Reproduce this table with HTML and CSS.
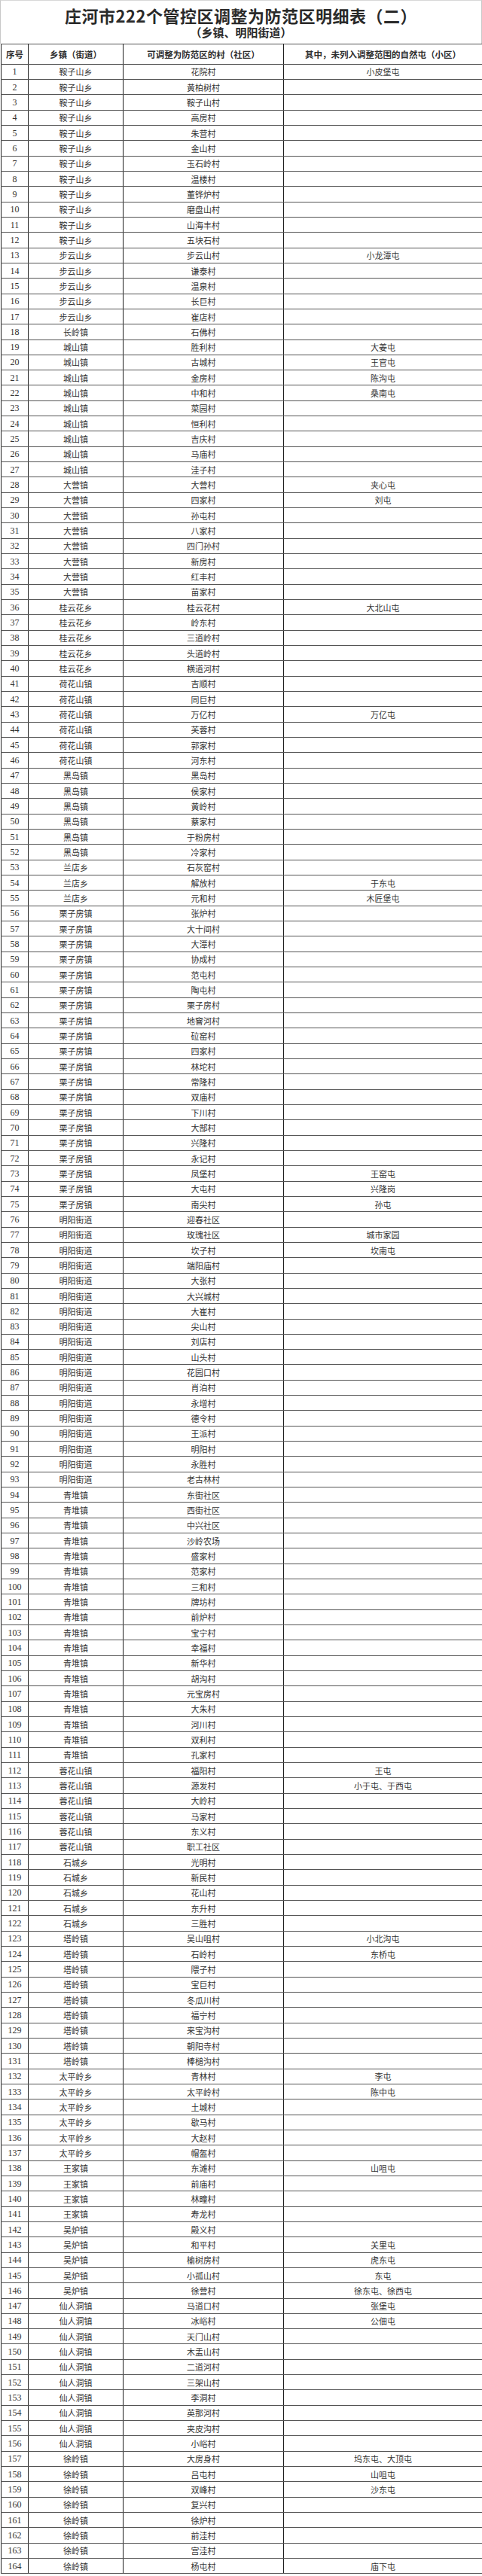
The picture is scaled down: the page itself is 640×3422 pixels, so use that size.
FILE: index.html
```html
<!DOCTYPE html>
<html lang="zh-CN">
<head>
<meta charset="utf-8">
<title>庄河市222个管控区调整为防范区明细表（二）</title>
<link rel="stylesheet" href="styles.css">
</head>
<body>
<div class="sheet">
  <header class="heading">
    <h1 class="title">庄河市222个管控区调整为防范区明细表（二）</h1>
    <p class="subtitle">（乡镇、明阳街道）</p>
  </header>
  <table class="grid">
    <colgroup><col class="c-no"><col class="c-town"><col class="c-vil"><col class="c-ex"></colgroup>
    <thead>
      <tr><th>序号</th><th>乡镇（街道）</th><th>可调整为防范区的村（社区）</th><th>其中，未列入调整范围的自然屯（小区）</th></tr>
    </thead>
    <tbody>
<tr><td class="n">1</td><td>鞍子山乡</td><td>花院村</td><td>小皮堡屯</td></tr>
<tr><td class="n">2</td><td>鞍子山乡</td><td>黄柏树村</td><td></td></tr>
<tr><td class="n">3</td><td>鞍子山乡</td><td>鞍子山村</td><td></td></tr>
<tr><td class="n">4</td><td>鞍子山乡</td><td>高房村</td><td></td></tr>
<tr><td class="n">5</td><td>鞍子山乡</td><td>朱营村</td><td></td></tr>
<tr><td class="n">6</td><td>鞍子山乡</td><td>金山村</td><td></td></tr>
<tr><td class="n">7</td><td>鞍子山乡</td><td>玉石岭村</td><td></td></tr>
<tr><td class="n">8</td><td>鞍子山乡</td><td>温楼村</td><td></td></tr>
<tr><td class="n">9</td><td>鞍子山乡</td><td>董铧炉村</td><td></td></tr>
<tr><td class="n">10</td><td>鞍子山乡</td><td>磨盘山村</td><td></td></tr>
<tr><td class="n">11</td><td>鞍子山乡</td><td>山海丰村</td><td></td></tr>
<tr><td class="n">12</td><td>鞍子山乡</td><td>五块石村</td><td></td></tr>
<tr><td class="n">13</td><td>步云山乡</td><td>步云山村</td><td>小龙潭屯</td></tr>
<tr><td class="n">14</td><td>步云山乡</td><td>谦泰村</td><td></td></tr>
<tr><td class="n">15</td><td>步云山乡</td><td>温泉村</td><td></td></tr>
<tr><td class="n">16</td><td>步云山乡</td><td>长巨村</td><td></td></tr>
<tr><td class="n">17</td><td>步云山乡</td><td>崔店村</td><td></td></tr>
<tr><td class="n">18</td><td>长岭镇</td><td>石佛村</td><td></td></tr>
<tr><td class="n">19</td><td>城山镇</td><td>胜利村</td><td>大姜屯</td></tr>
<tr><td class="n">20</td><td>城山镇</td><td>古城村</td><td>王官屯</td></tr>
<tr><td class="n">21</td><td>城山镇</td><td>金房村</td><td>陈沟屯</td></tr>
<tr><td class="n">22</td><td>城山镇</td><td>中和村</td><td>桑南屯</td></tr>
<tr><td class="n">23</td><td>城山镇</td><td>菜园村</td><td></td></tr>
<tr><td class="n">24</td><td>城山镇</td><td>恒利村</td><td></td></tr>
<tr><td class="n">25</td><td>城山镇</td><td>吉庆村</td><td></td></tr>
<tr><td class="n">26</td><td>城山镇</td><td>马庙村</td><td></td></tr>
<tr><td class="n">27</td><td>城山镇</td><td>洼子村</td><td></td></tr>
<tr><td class="n">28</td><td>大营镇</td><td>大营村</td><td>夹心屯</td></tr>
<tr><td class="n">29</td><td>大营镇</td><td>四家村</td><td>刘屯</td></tr>
<tr><td class="n">30</td><td>大营镇</td><td>孙屯村</td><td></td></tr>
<tr><td class="n">31</td><td>大营镇</td><td>八家村</td><td></td></tr>
<tr><td class="n">32</td><td>大营镇</td><td>四门孙村</td><td></td></tr>
<tr><td class="n">33</td><td>大营镇</td><td>新房村</td><td></td></tr>
<tr><td class="n">34</td><td>大营镇</td><td>红丰村</td><td></td></tr>
<tr><td class="n">35</td><td>大营镇</td><td>苗家村</td><td></td></tr>
<tr><td class="n">36</td><td>桂云花乡</td><td>桂云花村</td><td>大北山屯</td></tr>
<tr><td class="n">37</td><td>桂云花乡</td><td>岭东村</td><td></td></tr>
<tr><td class="n">38</td><td>桂云花乡</td><td>三道岭村</td><td></td></tr>
<tr><td class="n">39</td><td>桂云花乡</td><td>头道岭村</td><td></td></tr>
<tr><td class="n">40</td><td>桂云花乡</td><td>横道河村</td><td></td></tr>
<tr><td class="n">41</td><td>荷花山镇</td><td>吉顺村</td><td></td></tr>
<tr><td class="n">42</td><td>荷花山镇</td><td>同巨村</td><td></td></tr>
<tr><td class="n">43</td><td>荷花山镇</td><td>万亿村</td><td>万亿屯</td></tr>
<tr><td class="n">44</td><td>荷花山镇</td><td>芙蓉村</td><td></td></tr>
<tr><td class="n">45</td><td>荷花山镇</td><td>郭家村</td><td></td></tr>
<tr><td class="n">46</td><td>荷花山镇</td><td>河东村</td><td></td></tr>
<tr><td class="n">47</td><td>黑岛镇</td><td>黑岛村</td><td></td></tr>
<tr><td class="n">48</td><td>黑岛镇</td><td>侯家村</td><td></td></tr>
<tr><td class="n">49</td><td>黑岛镇</td><td>黄岭村</td><td></td></tr>
<tr><td class="n">50</td><td>黑岛镇</td><td>蔡家村</td><td></td></tr>
<tr><td class="n">51</td><td>黑岛镇</td><td>于粉房村</td><td></td></tr>
<tr><td class="n">52</td><td>黑岛镇</td><td>冷家村</td><td></td></tr>
<tr><td class="n">53</td><td>兰店乡</td><td>石灰窑村</td><td></td></tr>
<tr><td class="n">54</td><td>兰店乡</td><td>解放村</td><td>于东屯</td></tr>
<tr><td class="n">55</td><td>兰店乡</td><td>元和村</td><td>木匠堡屯</td></tr>
<tr><td class="n">56</td><td>栗子房镇</td><td>张炉村</td><td></td></tr>
<tr><td class="n">57</td><td>栗子房镇</td><td>大十间村</td><td></td></tr>
<tr><td class="n">58</td><td>栗子房镇</td><td>大潭村</td><td></td></tr>
<tr><td class="n">59</td><td>栗子房镇</td><td>协成村</td><td></td></tr>
<tr><td class="n">60</td><td>栗子房镇</td><td>范屯村</td><td></td></tr>
<tr><td class="n">61</td><td>栗子房镇</td><td>陶屯村</td><td></td></tr>
<tr><td class="n">62</td><td>栗子房镇</td><td>栗子房村</td><td></td></tr>
<tr><td class="n">63</td><td>栗子房镇</td><td>地窨河村</td><td></td></tr>
<tr><td class="n">64</td><td>栗子房镇</td><td>砬窑村</td><td></td></tr>
<tr><td class="n">65</td><td>栗子房镇</td><td>四家村</td><td></td></tr>
<tr><td class="n">66</td><td>栗子房镇</td><td>林坨村</td><td></td></tr>
<tr><td class="n">67</td><td>栗子房镇</td><td>常隆村</td><td></td></tr>
<tr><td class="n">68</td><td>栗子房镇</td><td>双庙村</td><td></td></tr>
<tr><td class="n">69</td><td>栗子房镇</td><td>下川村</td><td></td></tr>
<tr><td class="n">70</td><td>栗子房镇</td><td>大郜村</td><td></td></tr>
<tr><td class="n">71</td><td>栗子房镇</td><td>兴隆村</td><td></td></tr>
<tr><td class="n">72</td><td>栗子房镇</td><td>永记村</td><td></td></tr>
<tr><td class="n">73</td><td>栗子房镇</td><td>凤堡村</td><td>王窑屯</td></tr>
<tr><td class="n">74</td><td>栗子房镇</td><td>大屯村</td><td>兴隆岗</td></tr>
<tr><td class="n">75</td><td>栗子房镇</td><td>南尖村</td><td>孙屯</td></tr>
<tr><td class="n">76</td><td>明阳街道</td><td>迎春社区</td><td></td></tr>
<tr><td class="n">77</td><td>明阳街道</td><td>玫瑰社区</td><td>城市家园</td></tr>
<tr><td class="n">78</td><td>明阳街道</td><td>坎子村</td><td>坎南屯</td></tr>
<tr><td class="n">79</td><td>明阳街道</td><td>端阳庙村</td><td></td></tr>
<tr><td class="n">80</td><td>明阳街道</td><td>大张村</td><td></td></tr>
<tr><td class="n">81</td><td>明阳街道</td><td>大兴城村</td><td></td></tr>
<tr><td class="n">82</td><td>明阳街道</td><td>大崔村</td><td></td></tr>
<tr><td class="n">83</td><td>明阳街道</td><td>尖山村</td><td></td></tr>
<tr><td class="n">84</td><td>明阳街道</td><td>刘店村</td><td></td></tr>
<tr><td class="n">85</td><td>明阳街道</td><td>山头村</td><td></td></tr>
<tr><td class="n">86</td><td>明阳街道</td><td>花园口村</td><td></td></tr>
<tr><td class="n">87</td><td>明阳街道</td><td>肖泊村</td><td></td></tr>
<tr><td class="n">88</td><td>明阳街道</td><td>永增村</td><td></td></tr>
<tr><td class="n">89</td><td>明阳街道</td><td>德令村</td><td></td></tr>
<tr><td class="n">90</td><td>明阳街道</td><td>王派村</td><td></td></tr>
<tr><td class="n">91</td><td>明阳街道</td><td>明阳村</td><td></td></tr>
<tr><td class="n">92</td><td>明阳街道</td><td>永胜村</td><td></td></tr>
<tr><td class="n">93</td><td>明阳街道</td><td>老古林村</td><td></td></tr>
<tr><td class="n">94</td><td>青堆镇</td><td>东街社区</td><td></td></tr>
<tr><td class="n">95</td><td>青堆镇</td><td>西街社区</td><td></td></tr>
<tr><td class="n">96</td><td>青堆镇</td><td>中兴社区</td><td></td></tr>
<tr><td class="n">97</td><td>青堆镇</td><td>沙岭农场</td><td></td></tr>
<tr><td class="n">98</td><td>青堆镇</td><td>盛家村</td><td></td></tr>
<tr><td class="n">99</td><td>青堆镇</td><td>范家村</td><td></td></tr>
<tr><td class="n">100</td><td>青堆镇</td><td>三和村</td><td></td></tr>
<tr><td class="n">101</td><td>青堆镇</td><td>牌坊村</td><td></td></tr>
<tr><td class="n">102</td><td>青堆镇</td><td>前炉村</td><td></td></tr>
<tr><td class="n">103</td><td>青堆镇</td><td>宝宁村</td><td></td></tr>
<tr><td class="n">104</td><td>青堆镇</td><td>幸福村</td><td></td></tr>
<tr><td class="n">105</td><td>青堆镇</td><td>新华村</td><td></td></tr>
<tr><td class="n">106</td><td>青堆镇</td><td>胡沟村</td><td></td></tr>
<tr><td class="n">107</td><td>青堆镇</td><td>元宝房村</td><td></td></tr>
<tr><td class="n">108</td><td>青堆镇</td><td>大朱村</td><td></td></tr>
<tr><td class="n">109</td><td>青堆镇</td><td>河川村</td><td></td></tr>
<tr><td class="n">110</td><td>青堆镇</td><td>双利村</td><td></td></tr>
<tr><td class="n">111</td><td>青堆镇</td><td>孔家村</td><td></td></tr>
<tr><td class="n">112</td><td>蓉花山镇</td><td>福阳村</td><td>王屯</td></tr>
<tr><td class="n">113</td><td>蓉花山镇</td><td>源发村</td><td>小于屯、于西屯</td></tr>
<tr><td class="n">114</td><td>蓉花山镇</td><td>大岭村</td><td></td></tr>
<tr><td class="n">115</td><td>蓉花山镇</td><td>马家村</td><td></td></tr>
<tr><td class="n">116</td><td>蓉花山镇</td><td>东义村</td><td></td></tr>
<tr><td class="n">117</td><td>蓉花山镇</td><td>职工社区</td><td></td></tr>
<tr><td class="n">118</td><td>石城乡</td><td>光明村</td><td></td></tr>
<tr><td class="n">119</td><td>石城乡</td><td>新民村</td><td></td></tr>
<tr><td class="n">120</td><td>石城乡</td><td>花山村</td><td></td></tr>
<tr><td class="n">121</td><td>石城乡</td><td>东升村</td><td></td></tr>
<tr><td class="n">122</td><td>石城乡</td><td>三胜村</td><td></td></tr>
<tr><td class="n">123</td><td>塔岭镇</td><td>吴山咀村</td><td>小北沟屯</td></tr>
<tr><td class="n">124</td><td>塔岭镇</td><td>石岭村</td><td>东桥屯</td></tr>
<tr><td class="n">125</td><td>塔岭镇</td><td>隈子村</td><td></td></tr>
<tr><td class="n">126</td><td>塔岭镇</td><td>宝巨村</td><td></td></tr>
<tr><td class="n">127</td><td>塔岭镇</td><td>冬瓜川村</td><td></td></tr>
<tr><td class="n">128</td><td>塔岭镇</td><td>福宁村</td><td></td></tr>
<tr><td class="n">129</td><td>塔岭镇</td><td>来宝沟村</td><td></td></tr>
<tr><td class="n">130</td><td>塔岭镇</td><td>朝阳寺村</td><td></td></tr>
<tr><td class="n">131</td><td>塔岭镇</td><td>棒槌沟村</td><td></td></tr>
<tr><td class="n">132</td><td>太平岭乡</td><td>青林村</td><td>李屯</td></tr>
<tr><td class="n">133</td><td>太平岭乡</td><td>太平岭村</td><td>陈中屯</td></tr>
<tr><td class="n">134</td><td>太平岭乡</td><td>土城村</td><td></td></tr>
<tr><td class="n">135</td><td>太平岭乡</td><td>歇马村</td><td></td></tr>
<tr><td class="n">136</td><td>太平岭乡</td><td>大赵村</td><td></td></tr>
<tr><td class="n">137</td><td>太平岭乡</td><td>帽盔村</td><td></td></tr>
<tr><td class="n">138</td><td>王家镇</td><td>东滩村</td><td>山咀屯</td></tr>
<tr><td class="n">139</td><td>王家镇</td><td>前庙村</td><td></td></tr>
<tr><td class="n">140</td><td>王家镇</td><td>林疃村</td><td></td></tr>
<tr><td class="n">141</td><td>王家镇</td><td>寿龙村</td><td></td></tr>
<tr><td class="n">142</td><td>吴炉镇</td><td>殿义村</td><td></td></tr>
<tr><td class="n">143</td><td>吴炉镇</td><td>和平村</td><td>关里屯</td></tr>
<tr><td class="n">144</td><td>吴炉镇</td><td>榆树房村</td><td>虎东屯</td></tr>
<tr><td class="n">145</td><td>吴炉镇</td><td>小孤山村</td><td>东屯</td></tr>
<tr><td class="n">146</td><td>吴炉镇</td><td>徐营村</td><td>徐东屯、徐西屯</td></tr>
<tr><td class="n">147</td><td>仙人洞镇</td><td>马道口村</td><td>张堡屯</td></tr>
<tr><td class="n">148</td><td>仙人洞镇</td><td>冰峪村</td><td>公佃屯</td></tr>
<tr><td class="n">149</td><td>仙人洞镇</td><td>天门山村</td><td></td></tr>
<tr><td class="n">150</td><td>仙人洞镇</td><td>木盂山村</td><td></td></tr>
<tr><td class="n">151</td><td>仙人洞镇</td><td>二道河村</td><td></td></tr>
<tr><td class="n">152</td><td>仙人洞镇</td><td>三架山村</td><td></td></tr>
<tr><td class="n">153</td><td>仙人洞镇</td><td>李洞村</td><td></td></tr>
<tr><td class="n">154</td><td>仙人洞镇</td><td>英那河村</td><td></td></tr>
<tr><td class="n">155</td><td>仙人洞镇</td><td>夹皮沟村</td><td></td></tr>
<tr><td class="n">156</td><td>仙人洞镇</td><td>小峪村</td><td></td></tr>
<tr><td class="n">157</td><td>徐岭镇</td><td>大房身村</td><td>坞东屯、大顶屯</td></tr>
<tr><td class="n">158</td><td>徐岭镇</td><td>吕屯村</td><td>山咀屯</td></tr>
<tr><td class="n">159</td><td>徐岭镇</td><td>双峰村</td><td>沙东屯</td></tr>
<tr><td class="n">160</td><td>徐岭镇</td><td>复兴村</td><td></td></tr>
<tr><td class="n">161</td><td>徐岭镇</td><td>徐炉村</td><td></td></tr>
<tr><td class="n">162</td><td>徐岭镇</td><td>前洼村</td><td></td></tr>
<tr><td class="n">163</td><td>徐岭镇</td><td>宫洼村</td><td></td></tr>
<tr><td class="n">164</td><td>徐岭镇</td><td>杨屯村</td><td>庙下屯</td></tr>
    </tbody>
  </table>
</div>
</body>
</html>
```

FILE: styles.css
```css
* { box-sizing: border-box; }

html, body {
  margin: 0;
  padding: 0;
  background: #ffffff;
}

body {
  font-family: "Noto Sans CJK SC", "Noto Sans", sans-serif;
  color: #333333;
}

.sheet {
  width: 640px;
}

.heading {
  height: 58px;
  border-left: 1px solid #c8c8c8;
  border-right: 1px solid #c8c8c8;
  border-top: 1px solid #d8d8d8;
  display: flex;
  flex-direction: column;
  align-items: center;
  padding-top: 6px;
}

.title {
  margin: 0;
  font-size: 22px;
  line-height: 26px;
  font-weight: 700;
  color: #2a2a2a;
  letter-spacing: 0.5px;
}

.subtitle {
  margin: 0;
  font-size: 15px;
  line-height: 20px;
  font-weight: 700;
  color: #2a2a2a;
}

.grid {
  width: 639px;
  border-collapse: collapse;
  table-layout: fixed;
  margin-left: 1px;
}

.c-no { width: 36px; }
.c-town { width: 126px; }
.c-vil { width: 213px; }
.c-ex { width: 264px; }

.grid th,
.grid td {
  border-left: 1px solid #1e1e1e;
  border-right: 1px solid #1e1e1e;
  border-top: 1px solid #555555;
  border-bottom: 1px solid #555555;
  text-align: center;
  vertical-align: middle;
  padding: 0;
  white-space: nowrap;
  overflow: hidden;
}

.grid thead tr {
  height: 26.6px;
}

.grid th {
  font-size: 11.5px;
  font-weight: 700;
  color: #2e2e2e;
  line-height: 14px;
}

.grid tbody tr {
  height: 20.34px;
}

.grid td {
  font-size: 11px;
  line-height: 13px;
  color: #333333;
  padding-top: 1px;
}

.grid td.n {
  font-family: "Liberation Serif", "DejaVu Serif", serif;
  font-size: 12px;
}
```
